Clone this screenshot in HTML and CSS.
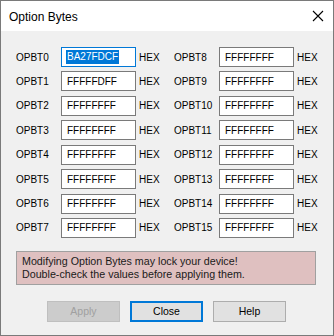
FILE: index.html
```html
<!DOCTYPE html>
<html>
<head>
<meta charset="utf-8">
<link rel="stylesheet" href="styles.css">
</head>
<body>
<div class="window">
  <div class="titlebar">
    <span class="title">Option Bytes</span>
    <svg class="close-x" width="12" height="12" viewBox="0 0 12 12"><path d="M1 1 L11 11 M11 1 L1 11" stroke="#000" stroke-width="1.1" fill="none"/></svg>
  </div>
  <div class="content">
    <div class="grid">
      <div class="col">
        <div class="row"><span class="lbl">OPBT0</span><div class="field focus"><span class="sel">BA27FDCF</span></div><span class="hex">HEX</span></div>
        <div class="row"><span class="lbl">OPBT1</span><div class="field">FFFFFDFF</div><span class="hex">HEX</span></div>
        <div class="row"><span class="lbl">OPBT2</span><div class="field">FFFFFFFF</div><span class="hex">HEX</span></div>
        <div class="row"><span class="lbl">OPBT3</span><div class="field">FFFFFFFF</div><span class="hex">HEX</span></div>
        <div class="row"><span class="lbl">OPBT4</span><div class="field">FFFFFFFF</div><span class="hex">HEX</span></div>
        <div class="row"><span class="lbl">OPBT5</span><div class="field">FFFFFFFF</div><span class="hex">HEX</span></div>
        <div class="row"><span class="lbl">OPBT6</span><div class="field">FFFFFFFF</div><span class="hex">HEX</span></div>
        <div class="row"><span class="lbl">OPBT7</span><div class="field">FFFFFFFF</div><span class="hex">HEX</span></div>
      </div>
      <div class="col">
        <div class="row"><span class="lbl">OPBT8</span><div class="field">FFFFFFFF</div><span class="hex">HEX</span></div>
        <div class="row"><span class="lbl">OPBT9</span><div class="field">FFFFFFFF</div><span class="hex">HEX</span></div>
        <div class="row"><span class="lbl">OPBT10</span><div class="field">FFFFFFFF</div><span class="hex">HEX</span></div>
        <div class="row"><span class="lbl">OPBT11</span><div class="field">FFFFFFFF</div><span class="hex">HEX</span></div>
        <div class="row"><span class="lbl">OPBT12</span><div class="field">FFFFFFFF</div><span class="hex">HEX</span></div>
        <div class="row"><span class="lbl">OPBT13</span><div class="field">FFFFFFFF</div><span class="hex">HEX</span></div>
        <div class="row"><span class="lbl">OPBT14</span><div class="field">FFFFFFFF</div><span class="hex">HEX</span></div>
        <div class="row"><span class="lbl">OPBT15</span><div class="field">FFFFFFFF</div><span class="hex">HEX</span></div>
      </div>
    </div>
    <div class="warning">Modifying Option Bytes may lock your device!<br>Double-check the values before applying them.</div>
    <div class="buttons">
      <div class="btn disabled">Apply</div>
      <div class="btn default">Close</div>
      <div class="btn">Help</div>
    </div>
  </div>
</div>
</body>
</html>
```
FILE: styles.css
```css
* { box-sizing: border-box; }
html, body { margin: 0; padding: 0; background: #f0f0f0; }
body { font-family: "Liberation Sans", Arial, sans-serif; color: #000; }
.window {
  width: 334px;
  height: 336px;
  border: 1px solid #7a7a7a;
  background: #f0f0f0;
  display: flex;
  flex-direction: column;
}
.titlebar {
  height: 30px;
  background: #fff;
  display: flex;
  align-items: center;
  justify-content: space-between;
  padding: 0 9px 0 8px;
  flex: none;
}
.title { font-size: 12px; color: #000; padding-top: 1px; }
.close-x { display: block; margin-top: -1px; }
.content {
  padding: 16px 0 0 15px;
  display: flex;
  flex-direction: column;
}
.grid { display: flex; }
.col {
  width: 158px;
  display: flex;
  flex-direction: column;
  gap: 4.43px;
}
.row {
  display: flex;
  align-items: center;
  height: 20px;
  font-size: 10px;
}
.lbl { width: 45px; color: #000; }
.field {
  width: 75px;
  height: 20px;
  border: 1px solid #7a7a7a;
  background: #fff;
  padding-left: 5px;
  display: flex;
  align-items: center;
  font-size: 10px;
}
.field.focus { border-color: #0078d7; padding-left: 4px; }
.sel { background: #0078d7; color: #fff; padding: 1px 1px 2px; line-height: 11px; }
.hex { margin-left: 3px; }
.warning {
  margin-top: 13px;
  width: 300px;
  border: 1px solid #a0a0a0;
  background: #dfc0c0;
  font-size: 10.7px;
  line-height: 13px;
  padding: 3px 5px;
  color: #1a1a1a;
}
.buttons {
  margin-top: 16px;
  display: flex;
  gap: 10px;
  padding-left: 31px;
}
.btn {
  width: 73px;
  height: 21px;
  border: 1px solid #adadad;
  background: #e1e1e1;
  font-size: 10.5px;
  display: flex;
  align-items: center;
  justify-content: center;
}
.btn.default { border: 2px solid #0078d7; }
.btn.disabled { background: #cccccc; border-color: #bfbfbf; color: #a0a0a0; }
```
